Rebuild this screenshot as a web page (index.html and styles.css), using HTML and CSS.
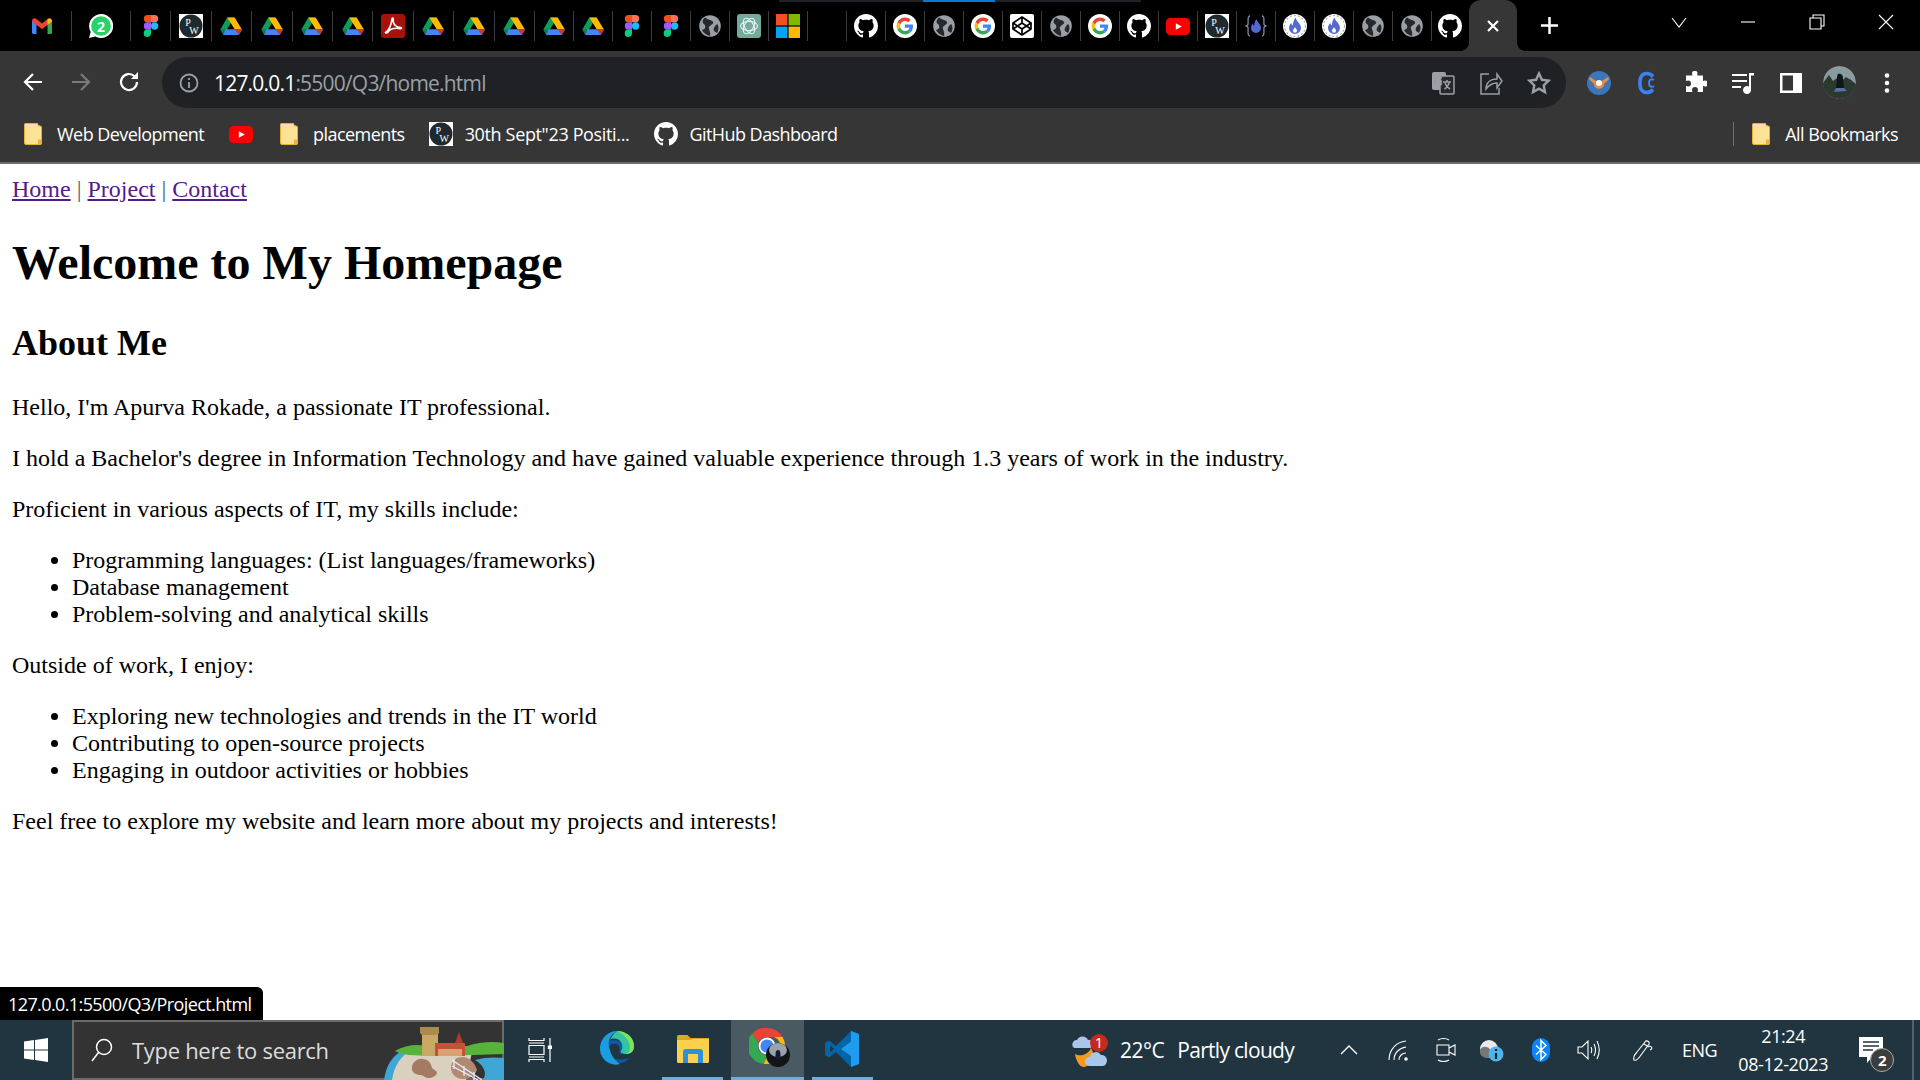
FILE: index.html
```html
<!DOCTYPE html>
<html>
  <head>
    <meta name="viewport" content="width=device-width, initial-scale=1.0">
    <title>Homepage</title>
    <link rel="stylesheet" href="styles.css">
  </head>

  <body>
    <!-- icon sheet -->
    <svg class="sheet" xmlns="http://www.w3.org/2000/svg">
      <symbol id="gmail" viewBox="0 0 24 24">
        <path fill="#4285f4" d="M2 6.500h4.500V20H3.500A1.500 1.500 0 0 1 2 18.500z"/>
        <path fill="#34a853" d="M17.500 6.500H22v12a1.500 1.500 0 0 1-1.500 1.500h-3z"/>
        <path fill="#ea4335" d="M2 7.500C2 4.500 4.500 3.500 6.500 5L12 9.500 17.500 5c2-1.500 4.500-.5 4.500 2.500L17.500 11 12 15 6.500 11z"/>
        <path fill="#fbbc04" d="M17.500 5.200C19.500 3.600 22 4.500 22 7.500L17.500 11z"/>
      </symbol>
      <symbol id="whatsapp" viewBox="0 0 24 24">
        <path fill="#fff" d="M12 0a12 12 0 0 0-10.300 18L0 24l6.200-1.600A12 12 0 1 0 12 0z"/>
        <circle cx="12" cy="12" r="9.800" fill="#25d366"/>
        <text x="12" y="17.500" text-anchor="middle" class="svg-num" fill="#fff">2</text>
      </symbol>
      <symbol id="figma" viewBox="0 0 24 24">
        <path fill="#f24e1e" d="M8.500 1H12v7.300H8.500a3.650 3.650 0 0 1 0-7.300z"/>
        <path fill="#ff7262" d="M12 1h3.500a3.650 3.650 0 0 1 0 7.300H12z"/>
        <path fill="#a259ff" d="M8.500 8.300H12v7.300H8.500a3.650 3.650 0 0 1 0-7.300z"/>
        <circle cx="15.600" cy="12" r="3.650" fill="#1abcfe"/>
        <path fill="#0acf83" d="M8.500 15.600H12v3.700a3.650 3.650 0 1 1-3.500-3.700z"/>
      </symbol>
      <symbol id="pw" viewBox="0 0 24 24">
        <rect width="24" height="24" fill="#fff"/>
        <ellipse cx="12" cy="12" rx="11.500" ry="11.500" fill="#1e2a30"/>
        <text x="9" y="12" text-anchor="middle" class="svg-pw" fill="#fff">P</text>
        <text x="15" y="20" text-anchor="middle" class="svg-pw" fill="#fff">W</text>
      </symbol>
      <symbol id="drive" viewBox="0 0 24 24">
        <path fill="#0f9d58" d="M8.300 3.500h6.800L6.700 17.800 1.500 15.300z"/>
        <path fill="#ffba00" d="M8.300 3.500h7.400l7 11.800h-7z"/>
        <path fill="#4285f4" d="M6.200 15.300h17l-3.400 5.800H4.400l-3-5.800z"/>
        <path fill="#d93025" d="M15.700 15.300h7.200l-3.100 5.800z"/>
        <path fill="#0b7c43" d="M1.300 15.300h5l-1.800 5.800z"/>
      </symbol>
      <symbol id="pdf" viewBox="0 0 24 24">
        <rect width="24" height="24" rx="3" fill="#a8100b"/>
        <path fill="none" stroke="#fff" stroke-width="1.600" d="M4.500 18.500c2.500-1 5.500-6 6.500-13.500.4-1.500 1.700-1 1.300.5-1 4 2.500 8 7.500 8 1 0 1 1.500-.5 1.200-4-.7-9.500-.5-12 3-1 1.300-2.500 1.500-2.800.8z"/>
      </symbol>
      <symbol id="globe" viewBox="0 0 24 24">
        <circle cx="12" cy="12" r="10.800" fill="#9aa0a6"/>
        <path fill="#26282b" d="M7 3.500C10 6 14 6 15 8c1 2-3 3-4 5s2 4 1 9c-4-1-7-4-8-6 4-1 4-4 2-6-2-1-2-4 1-6.500zM19 10c2 2 2 6 0 9l-3-2c-1-3 1-5 3-7z"/>
      </symbol>
      <symbol id="chatgpt" viewBox="0 0 24 24">
        <rect width="24" height="24" rx="3" fill="#74aa9c"/>
        <g fill="none" stroke="#e8f3f0" stroke-width="1.100">
          <ellipse cx="12" cy="12" rx="8.500" ry="4.500"/>
          <ellipse cx="12" cy="12" rx="8.500" ry="4.500" transform="rotate(60 12 12)"/>
          <ellipse cx="12" cy="12" rx="8.500" ry="4.500" transform="rotate(120 12 12)"/>
        </g>
      </symbol>
      <symbol id="ms" viewBox="0 0 24 24">
        <rect width="11.400" height="11.400" fill="#f25022"/>
        <rect x="12.600" width="11.400" height="11.400" fill="#7fba00"/>
        <rect y="12.600" width="11.400" height="11.400" fill="#00a4ef"/>
        <rect x="12.600" y="12.600" width="11.400" height="11.400" fill="#ffb900"/>
      </symbol>
      <symbol id="github" viewBox="0 0 16 16">
        <path fill="#fff" d="M8 0C3.580 0 0 3.580 0 8c0 3.540 2.290 6.530 5.470 7.590.4.070.55-.17.55-.38 0-.19-.01-.82-.01-1.490-2.010.37-2.530-.49-2.690-.94-.09-.23-.48-.94-.82-1.130-.28-.15-.68-.52-.01-.53.63-.01 1.080.58 1.230.82.72 1.210 1.870.87 2.330.66.070-.52.28-.87.51-1.070-1.780-.2-3.640-.89-3.640-3.950 0-.87.31-1.590.82-2.150-.08-.2-.36-1.020.08-2.120 0 0 .67-.21 2.200.82.64-.18 1.320-.27 2-.27s1.360.09 2 .27c1.530-1.040 2.200-.82 2.200-.82.44 1.100.16 1.920.08 2.120.51.56.82 1.270.82 2.150 0 3.070-1.870 3.750-3.650 3.950.29.25.54.73.54 1.480 0 1.070-.01 1.930-.01 2.200 0 .21.15.46.55.38A8.013 8.013 0 0 0 16 8c0-4.420-3.580-8-8-8z"/>
      </symbol>
      <symbol id="google" viewBox="0 0 24 24">
        <circle cx="12" cy="12" r="12" fill="#fff"/>
        <g transform="translate(3.600 3.600) scale(.35)">
          <path fill="#ea4335" d="M24 9.500c3.500 0 6.700 1.200 9.200 3.600l6.800-6.800C35.900 2.400 30.500 0 24 0 14.600 0 6.500 5.400 2.600 13.200l8 6.200C12.400 13.700 17.700 9.500 24 9.500z"/>
          <path fill="#4285f4" d="M47 24.500c0-1.600-.1-3.100-.4-4.500H24v9h12.900c-.6 3-2.200 5.500-4.800 7.200l7.700 6C44.400 37.900 47 31.800 47 24.500z"/>
          <path fill="#fbbc05" d="M10.500 28.600A14.500 14.500 0 0 1 10.500 19.400l-8-6.200a24 24 0 0 0 0 21.600z"/>
          <path fill="#34a853" d="M24 48c6.500 0 11.900-2.100 15.900-5.800l-7.700-6c-2.200 1.500-4.900 2.300-8.200 2.300-6.300 0-11.600-4.200-13.500-9.900l-8 6.200C6.500 42.600 14.600 48 24 48z"/>
        </g>
      </symbol>
      <symbol id="codepen" viewBox="0 0 24 24">
        <rect width="24" height="24" rx="2" fill="#fff"/>
        <g fill="none" stroke="#000" stroke-width="1.700" stroke-linejoin="round">
          <path d="M12 3l9 6v6l-9 6-9-6V9z"/>
          <path d="M12 3v6M12 15v6M3 9l9 6 9-6M3 15l9-6 9 6"/>
        </g>
      </symbol>
      <symbol id="youtube" viewBox="0 0 24 24">
        <rect y="4" width="24" height="17" rx="4.500" fill="#f00"/>
        <path fill="#fff" d="M9.800 9.200l6 3.300-6 3.300z"/>
      </symbol>
      <symbol id="fire" viewBox="0 0 24 24">
        <circle cx="12" cy="12" r="12" fill="#fff"/>
        <circle cx="12" cy="12" r="10.500" fill="none" stroke="#aab" stroke-width="1.200" stroke-dasharray="2 2"/>
        <path fill="#5468d4" d="M12.500 3.500c.5 3.500 5.500 6 5.500 10.500a6 6 0 0 1-12 0c0-2.500 1.300-4 2.300-5 .2 1.300.7 2 1.500 2.500.3-3 1-6 2.700-8z"/>
        <path fill="#fff" d="M12 13c.4 1.500 2 2 2 3.700a2 2 0 0 1-4 0c0-1.500 1.500-2.200 2-3.700z"/>
      </symbol>
      <symbol id="firecode" viewBox="0 0 24 24">
        <path fill="#5468d4" d="M12.500 5c.4 3 4.500 5 4.500 9a5 5 0 0 1-10 0c0-2 1-3.400 1.900-4.200.2 1 .6 1.700 1.300 2.100.2-2.500.8-5 2.300-6.900z"/>
        <g fill="none" stroke="#7d8aa8" stroke-width="1.300">
          <path d="M6 2c-3 0-1.500 6-2 8.500-.2 1-1 1.500-2.500 1.500 1.500 0 2.300.5 2.500 1.500.5 2.500-1 8.500 2 8.500"/>
          <path d="M18 2c3 0 1.500 6 2 8.500.2 1 1 1.500 2.500 1.500-1.500 0-2.300.5-2.500 1.500-.5 2.500 1 8.500-2 8.500"/>
        </g>
      </symbol>
      <symbol id="folder" viewBox="0 0 18 22">
        <path fill="#fde293" stroke="#e8b23a" stroke-width="1" d="M.5 1.500a1 1 0 0 1 1-1h12l1 2.500a2 2 0 0 1 3 2v15a1.500 1.500 0 0 1-1.500 1.500h-14a1.500 1.500 0 0 1-1.500-1.500z"/>
        <path fill="#e8b23a" d="M14 21.500v-4a1 1 0 0 1 1-1h2.500v5z"/>
      </symbol>
    </svg>

    <!-- browser chrome -->
    <header class="browser">
      <div class="tabstrip">
        <div class="top-strip"><span class="top-strip-blue"></span></div>
        <div class="tabs">
          <div class="tab tab-gmail"><svg class="fav"><use href="#gmail"/></svg></div>
          <div class="tab tab-wa"><svg class="fav"><use href="#whatsapp"/></svg></div>
          <div class="tab tab-wide"><svg class="fav"><use href="#figma"/></svg></div>
          <div class="tab tab-wide"><svg class="fav"><use href="#pw"/></svg></div>
          <div class="tab tab-wide"><svg class="fav"><use href="#drive"/></svg></div>
          <div class="tab tab-wide"><svg class="fav"><use href="#drive"/></svg></div>
          <div class="tab tab-wide"><svg class="fav"><use href="#drive"/></svg></div>
          <div class="tab tab-wide"><svg class="fav"><use href="#drive"/></svg></div>
          <div class="tab tab-wide"><svg class="fav"><use href="#pdf"/></svg></div>
          <div class="tab tab-wide"><svg class="fav"><use href="#drive"/></svg></div>
          <div class="tab tab-wide"><svg class="fav"><use href="#drive"/></svg></div>
          <div class="tab tab-wide"><svg class="fav"><use href="#drive"/></svg></div>
          <div class="tab"><svg class="fav"><use href="#drive"/></svg></div>
          <div class="tab"><svg class="fav"><use href="#drive"/></svg></div>
          <div class="tab"><svg class="fav"><use href="#figma"/></svg></div>
          <div class="tab"><svg class="fav"><use href="#figma"/></svg></div>
          <div class="tab"><svg class="fav"><use href="#globe"/></svg></div>
          <div class="tab"><svg class="fav"><use href="#chatgpt"/></svg></div>
          <div class="tab"><svg class="fav"><use href="#ms"/></svg></div>
          <div class="tab"></div>
          <div class="tab"><svg class="fav"><use href="#github"/></svg></div>
          <div class="tab"><svg class="fav"><use href="#google"/></svg></div>
          <div class="tab"><svg class="fav"><use href="#globe"/></svg></div>
          <div class="tab"><svg class="fav"><use href="#google"/></svg></div>
          <div class="tab"><svg class="fav"><use href="#codepen"/></svg></div>
          <div class="tab"><svg class="fav"><use href="#globe"/></svg></div>
          <div class="tab"><svg class="fav"><use href="#google"/></svg></div>
          <div class="tab"><svg class="fav"><use href="#github"/></svg></div>
          <div class="tab"><svg class="fav"><use href="#youtube"/></svg></div>
          <div class="tab"><svg class="fav"><use href="#pw"/></svg></div>
          <div class="tab"><svg class="fav"><use href="#firecode"/></svg></div>
          <div class="tab"><svg class="fav"><use href="#fire"/></svg></div>
          <div class="tab"><svg class="fav"><use href="#fire"/></svg></div>
          <div class="tab"><svg class="fav"><use href="#globe"/></svg></div>
          <div class="tab"><svg class="fav"><use href="#globe"/></svg></div>
          <div class="tab tab-last"><svg class="fav"><use href="#github"/></svg></div>
        </div>
        <div class="tab-active">
          <svg class="tab-close" viewBox="0 0 14 14"><path d="M2 2l10 10M12 2L2 12"/></svg>
        </div>
        <svg class="new-tab" viewBox="0 0 20 20"><path d="M10 1v18M1 10h18"/></svg>
        <div class="win-controls">
          <svg class="win-ico" viewBox="0 0 20 20"><path d="M3 6l7 9 7-9"/></svg>
          <svg class="win-ico" viewBox="0 0 20 20"><path d="M3 10h14"/></svg>
          <svg class="win-ico" viewBox="0 0 20 20"><path d="M3 6h11v11H3zM6 6V3h11v11h-3"/></svg>
          <svg class="win-ico" viewBox="0 0 20 20"><path d="M3 3l14 14M17 3L3 17"/></svg>
        </div>
      </div>

      <div class="toolbar">
        <svg class="nav-btn" viewBox="0 0 24 24"><path d="M21 12H4M12 4l-8 8 8 8"/></svg>
        <svg class="nav-btn nav-off" viewBox="0 0 24 24"><path d="M3 12h17M12 4l8 8-8 8"/></svg>
        <svg class="nav-btn" viewBox="0 0 24 24"><path d="M20 12a8 8 0 1 1-2.500-5.800"/><path class="solid" d="M21 2v7h-7z"/></svg>
        <div class="omnibox">
          <svg class="omni-info" viewBox="0 0 20 20"><circle cx="10" cy="10" r="8.500"/><path d="M10 9v6M10 5v2"/></svg>
          <div class="url"><span class="url-host">127.0.0.1</span>:5500/Q3/home.html</div>
          <div class="omni-right">
            <svg class="omni-ico" viewBox="0 0 24 24"><rect x="1" y="1" width="14" height="18" rx="2" fill="#9aa0a6" stroke="none"/><rect x="9" y="5" width="14" height="18" rx="1" fill="#26282b"/><text x="7" y="14" text-anchor="middle" class="svg-g" fill="#26282b">G</text><path d="M12 11h8M16 9v2M18.500 11c-1 3-3 6-5 7M14 12c1 3 3 5 5 6"/></svg>
            <svg class="omni-ico" viewBox="0 0 24 24"><path d="M10 3H2v20h18v-6"/><path d="M7 18c0-6 4-10 11-10V3l5 7-5 7v-5c-5 0-8 2-11 6z"/></svg>
            <svg class="omni-ico" viewBox="0 0 24 24"><path stroke-width="2.400" d="M12 2.500l2.900 6.300 6.800.8-5 4.700 1.300 6.800-6-3.400-6 3.400 1.300-6.800-5-4.700 6.800-.8z"/></svg>
          </div>
        </div>
        <div class="ext-group">
          <svg class="ext" viewBox="0 0 24 24"><ellipse cx="12" cy="12" rx="12" ry="12" fill="#3a76b8"/><path fill="#f08a3c" d="M3 6l6 4h6l6-4 1 2-5 5a5 5 0 0 1-10 0L2 8z"/><circle cx="12" cy="12" r="3" fill="#fff"/></svg>
          <svg class="ext" viewBox="0 0 24 24"><path fill="none" stroke="#3b82f6" stroke-width="3.600" d="M18 5.500A8.500 8.500 0 0 0 9 3C3.500 5.500 3.500 18.500 9 21a8.500 8.500 0 0 0 9-2.500"/><path fill="none" stroke="#3b82f6" stroke-width="2" d="M19 9c-3-2-5 0-5 3s2 5 5 3"/></svg>
          <svg class="ext" viewBox="0 0 24 24"><path fill="#fff" d="M9 2a2.800 2.800 0 0 1 5.500 0c0 1-.3 1.500-.3 2.500H20v5.500c1-.3 1.500-.5 2-.5a3 3 0 0 1 0 6c-.5 0-1-.2-2-.5V21h-5.500c.3-1 .5-1.500.5-2a3 3 0 0 0-6 0c0 .5.2 1 .5 2H3v-6c1 .3 1.500.5 2 .5a3 3 0 0 0 0-6c-.5 0-1 .2-2 .5V4.500h6.300C9.300 3.500 9 3 9 2z"/></svg>
          <svg class="ext" viewBox="0 0 24 24"><path fill="none" stroke="#fff" stroke-width="2.200" d="M1 4h15M1 10h15M1 16h9"/><path fill="#fff" d="M18 2h5v2.500h-3V19a4 4 0 1 1-2-3.400z"/></svg>
          <svg class="ext" viewBox="0 0 24 24"><path fill="#fff" d="M1 2h22v20H1zM3.500 4.500v15H14v-15z"/></svg>
          <svg class="ext avatar" viewBox="0 0 33 33">
            <circle cx="16.500" cy="16.500" r="16.500" fill="#8a9ba0"/>
            <path fill="#2a3a2e" d="M0 17l6-8 4 6 4-3 5 3 4-4 5 3 5 4c1 10-8 15-16 15S-1 27 0 17z"/>
            <path fill="#11161a" d="M15 8c3-1 5 1 5 4l1 10h-8l1-9c0-2 0-4 1-5z"/>
            <path fill="#5a6ea8" d="M13 22h8l3 3-13 1z"/>
          </svg>
          <svg class="ext" viewBox="0 0 24 24"><circle cx="12" cy="4.500" r="2.300" fill="#fff"/><circle cx="12" cy="12" r="2.300" fill="#fff"/><circle cx="12" cy="19.500" r="2.300" fill="#fff"/></svg>
        </div>
      </div>

      <div class="bookmarks">
        <div class="bm bm-web"><svg class="bm-folder"><use href="#folder"/></svg><span>Web Development</span></div>
        <div class="bm bm-yt"><svg class="bm-yt-ico"><use href="#youtube"/></svg></div>
        <div class="bm bm-place"><svg class="bm-folder"><use href="#folder"/></svg><span>placements</span></div>
        <div class="bm bm-pw"><svg class="bm-fav"><use href="#pw"/></svg><span>30th Sept"23 Positi...</span></div>
        <div class="bm bm-gh"><svg class="bm-fav"><use href="#github"/></svg><span>GitHub Dashboard</span></div>
        <div class="bm bm-all"><svg class="bm-folder"><use href="#folder"/></svg><span>All Bookmarks</span></div>
      </div>
    </header>

    <!-- page -->
    <main class="page">
      <nav class="site-nav"><a href="#" class="link">Home</a> <span class="sep">|</span> <a href="#" class="link">Project</a> <span class="sep">|</span> <a href="#" class="link">Contact</a></nav>
      <h1>Welcome to My Homepage</h1>
      <h2>About Me</h2>
      <p>Hello, I'm Apurva Rokade, a passionate IT professional.</p>
      <p>I hold a Bachelor's degree in Information Technology and have gained valuable experience through 1.3 years of work in the industry.</p>
      <p>Proficient in various aspects of IT, my skills include:</p>
      <ul>
        <li>Programming languages: (List languages/frameworks)</li>
        <li>Database management</li>
        <li>Problem-solving and analytical skills</li>
      </ul>
      <p>Outside of work, I enjoy:</p>
      <ul>
        <li>Exploring new technologies and trends in the IT world</li>
        <li>Contributing to open-source projects</li>
        <li>Engaging in outdoor activities or hobbies</li>
      </ul>
      <p>Feel free to explore my website and learn more about my projects and interests!</p>
      <div class="status-bubble">127.0.0.1:5500/Q3/Project.html</div>
    </main>

    <!-- windows taskbar -->
    <footer class="taskbar">
      <svg class="start" viewBox="0 0 24 24"><path fill="#fff" d="M0 3.400l10-1.400v9.500H0zM11 1.900L24 0v11.500H11zM0 12.500h10V22L0 20.600zM11 12.500h13V24l-13-1.900z"/></svg>
      <div class="search">
        <svg class="search-ico" viewBox="0 0 24 24"><circle cx="14" cy="9" r="7.500"/><path d="M8.500 14.500L2 23"/></svg>
        <span class="search-text">Type here to search</span>
        <svg class="search-art" viewBox="0 0 121 58">
          <path fill="#3fa7d6" d="M1 58C3 44 9 33 22 27l20 31z"/>
          <path fill="#d9d0bd" d="M9 58c2-14 9-25 20-30l60 2-6 28z"/>
          <path fill="#58b23c" d="M12 29c10-6 22-7 30-5h42c12-4 26-5 37-3v11l-30 1-45 1-20-1c-6-1-11-2-14-4z"/>
          <path fill="#3fa7d6" d="M92 38c10-3 20-3 29-2v22H100c4-6 2-14-8-20z"/>
          <rect x="39" y="8" width="16" height="26" fill="#c9a865"/>
          <path fill="#a98c4e" d="M37 5h19v6l-2 2H39l-2-2z"/>
          <path fill="#c8503a" d="M52 21h30v13H52z"/>
          <path fill="#b03a2c" d="M72 21l4-11 4 11z"/>
          <path fill="#d9a070" d="M55 27h24v7H55z"/>
          <path fill="#a47a64" d="M29 48c-1-8 6-12 11-11 7 1 8 5 9 9l5 4c0 4-5 6-9 6-3 0-5-3-7-3-4 0-8-2-9-5z"/>
          <path fill="#b08a72" d="M68 46c0-8 6-11 12-11s12 6 14 13c-2 6-8 9-14 9-7 0-12-5-12-11z"/>
          <g fill="none" stroke="#eef" stroke-width="1.300">
            <path d="M69 38l30 20M69 44l26 14M71 37v10M81 44v10M91 50v8"/>
          </g>
        </svg>
      </div>
      <svg class="taskview" viewBox="0 0 24 24"><path fill="none" stroke="#fff" stroke-width="1.200" d="M1 0v2.500h15V0M1 5h15M1 7.500h15v9H1zM1 19h15M1 24v-2.500h15V24M22 0v24"/><rect x="19.800" y="7.500" width="4.200" height="3.500" fill="#fff"/></svg>
      <div class="tb-app tb-edge">
        <svg class="tb-ico" viewBox="0 0 36 36">
          <path fill="#0c59a4" d="M31 27c-3 3-7 5-12 5-8 0-15-7-15-14 0-5 6-9 10-9 7 0 11 4 11 9 0 3-2 5-3 5-4-1 1-5-3-9-3-3-10-1-10 6 0 6 8 10 16 8 3 0 5-1 6-1z"/>
          <path fill="#1b9de2" d="M1 16C2 7 9 0 18 0 10 5 8 12 11 19c1 5 5 11 10 14C11 36 0 28 1 16z"/>
          <path fill="#36c5a4" d="M18 0c10 0 17 7 17 15 0 6-4 8-8 8-4 0-6-2-5-3 2-2 2-7-1-10-3-3-8-3-10-1C13 5 15 2 18 0z"/>
          <path fill="#7de35a" d="M35 15c0 6-4 8-8 8 3-1 4-4 4-7 0-6-6-13-13-16 10 0 17 7 17 15z"/>
        </svg>
      </div>
      <div class="tb-app tb-files">
        <svg class="tb-files-ico" viewBox="0 0 32 28">
          <path fill="#e3a51a" d="M0 1.500A1.500 1.500 0 0 1 1.500 0h9l3 3H32v6H0z"/>
          <path fill="#fcd04f" d="M0 5h13l3-1h15a1 1 0 0 1 1 1v21.500a1.500 1.500 0 0 1-1.500 1.500h-29A1.500 1.500 0 0 1 0 26.500z"/>
          <path fill="#2f8fd8" d="M6 17a3 3 0 0 1 3-3h14a3 3 0 0 1 3 3v11h-5v-9H11v9H6z"/>
        </svg>
      </div>
      <div class="tb-app tb-chrome">
        <svg class="tb-chrome-ico" viewBox="0 0 50 48">
          <path fill="#ea4335" d="M18 0a18 18 0 0 1 15.600 9H18a9 9 0 0 0-8.500 6L3 5.800A18 18 0 0 1 18 0z"/>
          <path fill="#34a853" d="M3 5.800L9.500 15A9 9 0 0 0 19 27l-4.500 8.700A18 18 0 0 1 3 5.800z"/>
          <path fill="#fbbc04" d="M33.600 9a18 18 0 0 1-19 26.700L19 27a9 9 0 0 0 6-18z"/>
          <circle cx="18" cy="18" r="7.500" fill="#4285f4" stroke="#fff" stroke-width="1.800"/>
          <circle cx="29" cy="27" r="12" fill="#111518"/>
          <ellipse cx="29" cy="22" rx="9" ry="7" fill="#9aa3aa"/>
          <ellipse cx="29" cy="27" rx="2.500" ry="5" fill="#141a38"/>
        </svg>
      </div>
      <div class="tb-app tb-code">
        <svg class="tb-ico" viewBox="0 0 36 36">
          <path fill="#0065a9" d="M26 0L11 15 4 9.500 0 12v12l4 2.500 7-5.500 15 15 8-3V3zM5 14.500L9 18l-4 3.500z"/>
          <path fill="#1f9cf0" d="M26 0l8 3v30l-8 3V25L16 18l10-7.500z"/>
        </svg>
      </div>

      <div class="weather">
        <svg class="weather-ico" viewBox="0 0 36 33">
          <path fill="#f39a1f" d="M3 20c5 3 13 1 16-6 5 7 1 18-7 19-4 .5-8-6-9-13z"/>
          <path fill="#a9c7ea" d="M2 14a4.500 4.500 0 0 1 3-8 6 6 0 0 1 11 0 4 4 0 0 1 2 8z"/>
          <path fill="#a9c7ea" d="M17 32a4.500 4.500 0 0 1 1-9 6 6 0 0 1 11-2 5.500 5.500 0 0 1 6 5c0 3-2 6-4 6z"/>
          <circle cx="27" cy="9" r="9" fill="#c42b1c"/>
          <text x="27" y="14" text-anchor="middle" class="svg-badge" fill="#fff">1</text>
        </svg>
        <span class="temp">22°C</span>
        <span class="cond">Partly cloudy</span>
      </div>

      <div class="tray">
        <svg class="tray-ico t-up" viewBox="0 0 20 20"><path d="M2 14l8-8 8 8"/></svg>
        <svg class="tray-ico t-wifi" viewBox="0 0 24 24"><path d="M3 22C3 12 10 4 20 3M8 22c0-7 5-12 12-13M13 22c0-4 3-7 7-7"/><circle cx="20" cy="21" r="1.200" fill="#fff"/></svg>
        <svg class="tray-ico t-meet" viewBox="0 0 24 28"><path d="M4 9h12v10H4zM16 12l6-3v10l-6-3M5 4c3-2 8-2 11 0M5 24c3 2 8 2 11 0"/></svg>
        <svg class="tray-ico t-drive" viewBox="0 0 28 28"><circle cx="13" cy="13" r="9" fill="#e8e8e8" stroke="none"/><path fill="#777" stroke="none" d="M4 14c2-5 9-4 11 1 2 3 1 7-3 7-5 0-9-3-8-8z"/><circle cx="20" cy="18" r="7.500" fill="#4fb3ec" stroke="none"/><path stroke="#16232b" stroke-width="2.200" d="M20 17v6M20 13v2"/></svg>
        <svg class="tray-bt" viewBox="0 0 18 24"><rect width="18" height="24" rx="9" fill="#0a84ff"/><path fill="none" stroke="#fff" stroke-width="1.500" d="M4 7.500l10 9-5 5v-19l5 5-10 9"/></svg>
        <svg class="tray-ico t-vol" viewBox="0 0 24 24"><path d="M1 9h4l6-6v18l-6-6H1zM14 9c1 2 1 4 0 6M17 6c2 4 2 8 0 12M20 3c3 6 3 12 0 18"/></svg>
        <svg class="tray-ico t-pen" viewBox="0 0 24 24"><path d="M3 22c-1-3 0-5 3-8l8-10c1-2 5-1 4 2l-8 11c-2 3-5 6-7 5zM13 6l5 3M18 8c3 0 4 3 1 4"/></svg>
        <span class="lang">ENG</span>
        <div class="clock"><span>21:24</span><span>08-12-2023</span></div>
        <div class="notif">
          <svg class="notif-ico" viewBox="0 0 24 28"><path fill="#fff" d="M0 1h24v20H13l-5 6v-6H0z"/><path stroke="#20353f" stroke-width="1.500" d="M4 6h16M4 10h16M4 14h10"/></svg>
          <span class="notif-count">2</span>
        </div>
      </div>
    </footer>
  </body>
</html>
```

FILE: styles.css
```css
html, body {
  margin: 0;
  height: 100%;
}

body {
  width: 1920px;
  height: 1080px;
  overflow: hidden;
  display: flex;
  flex-direction: column;
  background: #fff;
}

.sheet {
  display: none;
}

/* svg text bits */
.svg-num {
  font: bold 14px "Noto Sans", sans-serif;
}

.svg-pw {
  font: 10px "Liberation Serif", serif;
}

.svg-g {
  font: bold 11px "Noto Sans", sans-serif;
}

.svg-badge {
  font: 14px "Noto Sans", sans-serif;
}

/* Browser chrome */
.browser {
  flex: none;
  font-family: "Open Sans", "Noto Sans", sans-serif;
  color: #fff;
}

.tabstrip {
  position: relative;
  height: 51px;
  background: #000;
  display: flex;
  padding-left: 12px;
}

.top-strip {
  position: absolute;
  top: 0;
  left: 779px;
  width: 362px;
  height: 2px;
  background: #202124;
}

.top-strip-blue {
  position: absolute;
  left: 144px;
  width: 72px;
  height: 2px;
  background: #0b78d0;
}

.tabs {
  display: flex;
  flex: none;
  height: 40px;
  margin-top: 11px;
}

.tab {
  flex: none;
  width: 39px;
  height: 30px;
  box-sizing: border-box;
  border-right: 1.5px solid #3c3c3c;
  display: flex;
  align-items: center;
  justify-content: center;
}

.tab-wide {
  width: 40.4px;
}

.tab-gmail {
  width: 60px;
}

.tab-wa {
  width: 59px;
}

.tab-last {
  width: 37px;
  border-right: none;
}

.fav {
  width: 24px;
  height: 24px;
  flex: none;
}

.tab-active {
  flex: none;
  width: 48px;
  height: 51px;
  background: #363636;
  border-radius: 12px 12px 0 0;
  display: flex;
  align-items: center;
  justify-content: center;
  position: relative;
}

.tab-active::before,
.tab-active::after {
  content: "";
  position: absolute;
  bottom: 0;
  width: 8px;
  height: 8px;
}

.tab-active::before {
  left: -8px;
  background: radial-gradient(circle at 0 0, #000 7.5px, #363636 8px);
}

.tab-active::after {
  right: -8px;
  background: radial-gradient(circle at 100% 0, #000 7.5px, #363636 8px);
}

.tab-close {
  width: 14px;
  height: 14px;
  fill: none;
  stroke: #fff;
  stroke-width: 2.2;
}

.new-tab {
  flex: none;
  width: 19px;
  height: 19px;
  margin: 16px 0 0 23px;
  fill: none;
  stroke: #fff;
  stroke-width: 2.6;
}

.win-controls {
  margin-left: 110px;
  display: flex;
  gap: 49px;
  padding-top: 12px;
}

.win-ico {
  width: 20px;
  height: 20px;
  flex: none;
  fill: none;
  stroke: #fff;
  stroke-width: 1.1;
}

.toolbar {
  height: 57px;
  background: #363636;
  display: flex;
  align-items: flex-start;
  padding: 6px 0 0 21px;
  box-sizing: border-box;
}

.nav-btn {
  width: 24px;
  height: 24px;
  margin: 13px 24px 0 0;
  fill: none;
  stroke: #fff;
  stroke-width: 2.2;
}

.nav-off {
  stroke: #7b7b7b;
}

.solid {
  fill: #fff;
  stroke: none;
}

.omnibox {
  width: 1404px;
  height: 51px;
  margin-left: -3px;
  background: #202124;
  border-radius: 26px;
  display: flex;
  align-items: center;
  box-sizing: border-box;
  padding-left: 17px;
}

.omni-info {
  width: 20px;
  height: 20px;
  fill: none;
  stroke: #9aa0a6;
  stroke-width: 1.8;
}

.url {
  margin-left: 15px;
  font-size: 21px;
  color: #9aa0a6;
  letter-spacing: -0.8px;
}

.url-host {
  color: #fff;
}

.omni-right {
  margin-left: auto;
  padding-right: 15px;
  display: flex;
  gap: 24px;
}

.omni-ico {
  width: 24px;
  height: 24px;
  fill: none;
  stroke: #9aa0a6;
  stroke-width: 1.5;
}

.ext-group {
  display: flex;
  align-items: center;
  height: 51px;
  margin-left: 21px;
  gap: 24px;
}

.ext {
  width: 24px;
  height: 24px;
  flex: none;
}

.ext.avatar {
  width: 33px;
  height: 33px;
  margin: 0 -4.5px;
  border-radius: 50%;
}

.bookmarks {
  height: 56px;
  background: #363636;
  border-bottom: 2px solid #6b6b6b;
  box-sizing: border-box;
  display: flex;
  align-items: center;
  font-size: 18px;
  letter-spacing: -0.55px;
  padding-bottom: 2px;
}

.bm {
  display: flex;
  align-items: center;
  gap: 15px;
  white-space: nowrap;
}

.bm-folder {
  width: 18px;
  height: 22px;
  flex: none;
}

.bm-fav {
  width: 24px;
  height: 24px;
  flex: none;
}

.bm-yt-ico {
  width: 24px;
  height: 24px;
}

.bm-web {
  margin-left: 24px;
}

.bm-yt {
  margin-left: 25px;
}

.bm-place {
  margin-left: 27px;
}

.bm-pw {
  margin-left: 24px;
  gap: 12px;
  letter-spacing: -0.35px;
}

.bm-gh {
  margin-left: 25px;
  gap: 11px;
}

.bm-all {
  margin-left: auto;
  margin-right: 22px;
  padding-left: 18px;
  border-left: 1px solid #6f6f6f;
}

/* Page content */
.page {
  flex: 1;
  position: relative;
  padding: 12px;
  font-family: "Liberation Serif", serif;
  font-size: 24px;
  color: #000;
}

.page h1 {
  font-size: 48px;
  margin: 32px 0;
}

.page h2 {
  font-size: 36px;
  margin: 30px 0;
}

.page p {
  margin: 24px 0;
}

.page ul {
  margin: 24px 0;
  padding-left: 60px;
}

.link {
  color: #551a8b;
}

.sep {
  color: #47617a;
}

.status-bubble {
  position: absolute;
  left: 0;
  bottom: 0;
  height: 33px;
  padding: 0 12px 0 8px;
  background: #000;
  border-radius: 0 6px 0 0;
  color: #fff;
  font-family: "Open Sans", sans-serif;
  font-size: 18px;
  letter-spacing: -0.6px;
  line-height: 35px;
}

/* Taskbar */
.taskbar {
  flex: none;
  height: 60px;
  background: #20353f;
  display: flex;
  align-items: center;
  color: #fff;
  font-family: "Open Sans", sans-serif;
  font-size: 21px;
}

.start {
  width: 24px;
  height: 24px;
  margin-left: 24px;
  flex: none;
}

.search {
  flex: none;
  margin-left: 24px;
  width: 432px;
  height: 60px;
  box-sizing: border-box;
  background: #333;
  border: 2px solid #6b6b6b;
  display: flex;
  align-items: center;
  color: #ddd;
}

.search-ico {
  width: 24px;
  height: 24px;
  margin-left: 16px;
  flex: none;
  fill: none;
  stroke: #fff;
  stroke-width: 1.5;
}

.search-text {
  margin-left: 18px;
  font-size: 22px;
  letter-spacing: -0.3px;
  white-space: nowrap;
}

.search-art {
  margin-left: auto;
  margin-right: -2px;
  margin-bottom: -2px;
  align-self: flex-end;
  width: 121px;
  height: 58px;
  flex: none;
}

.taskview {
  width: 24px;
  height: 24px;
  margin-left: 24px;
  flex: none;
}

.tb-app {
  flex: none;
  width: 73px;
  height: 60px;
  box-sizing: border-box;
  border-bottom: 3px solid transparent;
  display: flex;
  align-items: center;
  justify-content: center;
}

.tb-ico {
  width: 36px;
  height: 36px;
  flex: none;
}

.tb-files-ico {
  width: 32px;
  height: 28px;
  flex: none;
}

.tb-chrome-ico {
  width: 50px;
  height: 48px;
  flex: none;
  margin: 6px -13px 0 0;
}

.tb-edge {
  margin-left: 28px;
}

.tb-files {
  width: 61px;
  margin-left: 9px;
  border-bottom-color: #6cb0e0;
}

.tb-chrome {
  margin-left: 8px;
  background: #4a5a63;
  border-bottom-color: #6cb0e0;
}

.tb-code {
  width: 61px;
  margin-left: 8px;
  border-bottom-color: #6cb0e0;
}

.weather {
  margin-left: 199px;
  display: flex;
  align-items: center;
  white-space: nowrap;
}

.weather-ico {
  width: 36px;
  height: 33px;
}

.temp {
  margin-left: 12px;
  letter-spacing: -0.5px;
}

.cond {
  margin-left: 13px;
  letter-spacing: -0.7px;
}

.tray {
  margin-left: 45px;
  display: flex;
  align-items: center;
  white-space: nowrap;
}

.tray-ico {
  width: 24px;
  height: 24px;
  flex: none;
  fill: none;
  stroke: #fff;
  stroke-width: 1.1;
}

.t-up {
  width: 20px;
  height: 20px;
  stroke-width: 1.4;
}

.t-wifi {
  margin-left: 27px;
}

.t-meet {
  margin-left: 23px;
  height: 28px;
}

.t-drive {
  margin-left: 19px;
  width: 28px;
  height: 28px;
}

.tray-bt {
  margin-left: 28px;
  width: 18px;
  height: 24px;
  flex: none;
}

.t-vol {
  margin-left: 27px;
}

.t-pen {
  margin-left: 30px;
}

.lang {
  margin-left: 27px;
  font-size: 18px;
  letter-spacing: -0.5px;
}

.clock {
  width: 94px;
  margin-left: 19px;
  display: flex;
  flex-direction: column;
  align-items: center;
  font-size: 18px;
  letter-spacing: -0.4px;
  gap: 3px;
  line-height: 25px;
}

.notif {
  position: relative;
  width: 24px;
  height: 28px;
  margin-left: 29px;
}

.notif-ico {
  display: block;
  width: 24px;
  height: 28px;
}

.notif-count {
  position: absolute;
  left: 11px;
  top: 12px;
  width: 24px;
  height: 24px;
  box-sizing: border-box;
  border-radius: 50%;
  background: #3d3d3d;
  border: 1px solid #aaa;
  font-size: 15px;
  font-weight: bold;
  line-height: 22px;
  text-align: center;
}

.taskbar::after {
  content: "";
  position: absolute;
  right: 6px;
  bottom: 0;
  width: 2px;
  height: 60px;
  background: #51646e;
}
```
